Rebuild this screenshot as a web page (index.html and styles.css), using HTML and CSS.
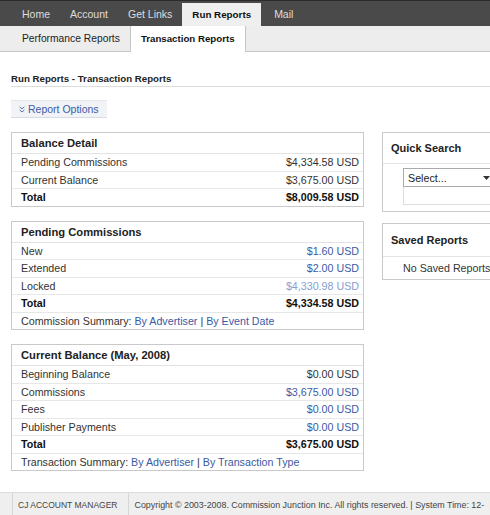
FILE: index.html
```html
<!DOCTYPE html>
<html>
<head>
<meta charset="utf-8">
<link rel="stylesheet" href="styles.css">
</head>
<body>
<div class="page">
  <nav class="topnav">
    <a href="#">Home</a>
    <a href="#">Account</a>
    <a href="#">Get Links</a>
    <a href="#" class="active">Run Reports</a>
    <a href="#">Mail</a>
  </nav>
  <nav class="subnav">
    <a href="#">Performance Reports</a>
    <a href="#" class="active">Transaction Reports</a>
  </nav>
  <div class="content">
    <h1 class="page-title">Run Reports - Transaction Reports</h1>
    <div class="options">
      <a href="#" class="options-btn"><svg class="chev" width="6" height="7" viewBox="0 0 6 7"><path d="M0.6 0.8 L3 2.9 L5.4 0.8 M0.6 3.9 L3 6 L5.4 3.9" fill="none" stroke="#5570ad" stroke-width="1"/></svg>Report Options</a>
    </div>
    <div class="columns">
      <div class="main">
        <div class="box">
          <div class="box-head">Balance Detail</div>
          <div class="row"><span>Pending Commissions</span><span>$4,334.58 USD</span></div>
          <div class="row"><span>Current Balance</span><span>$3,675.00 USD</span></div>
          <div class="row total"><span>Total</span><span>$8,009.58 USD</span></div>
        </div>
        <div class="box">
          <div class="box-head">Pending Commissions</div>
          <div class="row"><span>New</span><a href="#" class="val">$1.60 USD</a></div>
          <div class="row"><span>Extended</span><a href="#" class="val">$2.00 USD</a></div>
          <div class="row"><span>Locked</span><span class="val light">$4,330.98 USD</span></div>
          <div class="row total"><span>Total</span><span>$4,334.58 USD</span></div>
          <div class="row summary"><span>Commission Summary: <a href="#">By Advertiser</a> | <a href="#">By Event Date</a></span></div>
        </div>
        <div class="box">
          <div class="box-head">Current Balance (May, 2008)</div>
          <div class="row"><span>Beginning Balance</span><span>$0.00 USD</span></div>
          <div class="row"><span>Commissions</span><a href="#" class="val">$3,675.00 USD</a></div>
          <div class="row"><span>Fees</span><a href="#" class="val">$0.00 USD</a></div>
          <div class="row"><span>Publisher Payments</span><a href="#" class="val">$0.00 USD</a></div>
          <div class="row total"><span>Total</span><span>$3,675.00 USD</span></div>
          <div class="row summary"><span>Transaction Summary: <a href="#">By Advertiser</a> | <a href="#">By Transaction Type</a></span></div>
        </div>
      </div>
      <div class="side">
        <div class="sbox">
          <div class="sbox-head">Quick Search</div>
          <div class="qs-body">
            <div class="fake-select"><span>Select...</span><svg class="arrow" width="7" height="4" viewBox="0 0 7 4"><path d="M0 0 L7 0 L3.5 4 Z" fill="#333"/></svg></div>
            <div class="fake-input"></div>
          </div>
        </div>
        <div class="sbox">
          <div class="sbox-head">Saved Reports</div>
          <div class="saved-body">No Saved Reports</div>
        </div>
      </div>
    </div>
  </div>
  <footer class="footer">
    <div class="f-cell f-pad"></div>
    <div class="f-cell f-brand">CJ ACCOUNT MANAGER</div>
    <div class="f-cell f-copy">Copyright © 2003-2008. Commission Junction Inc. All rights reserved. | System Time: 12-</div>
  </footer>
</div>
</body>
</html>
```

FILE: styles.css
```css
html, body {
  margin: 0;
  padding: 0;
  overflow: hidden;
  background: #fff;
}
body {
  font-family: "Liberation Sans", Arial, sans-serif;
  color: #333;
}
.page {
  width: 640px;
}
a { text-decoration: none; }

.topnav {
  display: flex;
  align-items: flex-end;
  height: 25px;
  background: #4a4a4a;
  border-top: 1px solid #2a2a2a;
  padding-left: 12px;
}
.topnav a {
  color: #dedede;
  font-size: 10.5px;
  height: 23px;
  line-height: 23px;
  padding: 0 10px;
}
.topnav a.active {
  background: #efefef;
  color: #111;
  font-weight: bold;
  font-size: 9.8px;
  margin-right: 3px;
}

.subnav {
  display: flex;
  height: 25px;
  background: #ededed;
  border-bottom: 1px solid #c6c6c6;
  padding-left: 12px;
}
.subnav a {
  color: #222;
  font-size: 10.3px;
  line-height: 25px;
  height: 25px;
  padding: 0 10px;
}
.subnav a.active {
  background: #fff;
  border-left: 1px solid #c6c6c6;
  border-right: 1px solid #c6c6c6;
  height: 26px;
  margin-bottom: -1px;
  font-weight: bold;
  font-size: 9.7px;
  color: #111;
}

.content {
  padding-left: 11px;
}
.page-title {
  margin: 0;
  font-size: 9.7px;
  line-height: 12px;
  font-weight: bold;
  color: #222;
  padding: 21px 0 1px;
  border-bottom: 1px solid #dcdcdc;
}
.options {
  display: flex;
  margin-top: 13px;
}
.options-btn {
  display: flex;
  align-items: center;
  height: 16px;
  padding: 0 8px 0 8px;
  background: #f1f3f6;
  border-top: 1px solid #e3e6eb;
  border-bottom: 1px solid #d7dce4;
  color: #3d5ba6;
  font-size: 10.5px;
}
.chev {
  margin-right: 3px;
}

.columns {
  display: flex;
  align-items: flex-start;
  gap: 18px;
  margin-top: 14px;
}
.main {
  width: 353px;
}
.box {
  border: 1px solid #c9c9c9;
  margin-bottom: 14px;
}
.box-head {
  font-weight: bold;
  font-size: 11.2px;
  color: #222;
  height: 20px;
  line-height: 20px;
  padding-left: 9px;
  border-bottom: 1px solid #e3e3e3;
}
.row {
  display: flex;
  justify-content: space-between;
  height: 16.5px;
  line-height: 16.5px;
  padding: 0 4px 0 9px;
  border-bottom: 1px solid #e7e7e7;
  font-size: 10.7px;
  color: #333;
}
.row:last-child { border-bottom: 0; }
.row.total { font-weight: bold; color: #111; }
.row .val { color: #3a5aa4; }
.row .val.light { color: #86a0cf; }
.row.summary a { color: #3a5aa4; }

.side {
  width: 190px;
}
.sbox {
  border: 1px solid #c9c9c9;
  margin-bottom: 11px;
}
.sbox-head {
  font-weight: bold;
  font-size: 11px;
  color: #222;
  height: 30px;
  line-height: 30px;
  padding-left: 8px;
  border-bottom: 1px solid #e3e3e3;
}
.qs-body {
  padding: 4px 0 6px 20px;
}
.fake-select {
  display: flex;
  align-items: center;
  justify-content: space-between;
  box-sizing: border-box;
  width: 97px;
  height: 19px;
  border: 1px solid #aaa;
  padding: 0 9px 0 4px;
  font-size: 10.7px;
  color: #222;
  background: #fff;
}
.fake-input {
  box-sizing: border-box;
  width: 97px;
  height: 18px;
  border: 1px solid #ddd;
  border-top: 0;
}
.sbox:last-child .sbox-head { height: 32px; line-height: 33px; }
.saved-body {
  height: 22px;
  line-height: 22px;
  padding-left: 20px;
  font-size: 10.7px;
  color: #333;
}

.footer {
  display: flex;
  margin-top: 7px;
  height: 24px;
  background: #efefef;
  border-top: 1px solid #dcdcdc;
  font-size: 8.5px;
  color: #444;
  line-height: 24px;
}
.f-cell {
  border-right: 1px solid #d6d6d6;
  white-space: nowrap;
}
.f-pad { width: 12px; }
.f-brand { padding: 0 10px 0 5px; }
.f-copy { padding-left: 6px; border-right: 0; font-size: 8.9px; }
```
